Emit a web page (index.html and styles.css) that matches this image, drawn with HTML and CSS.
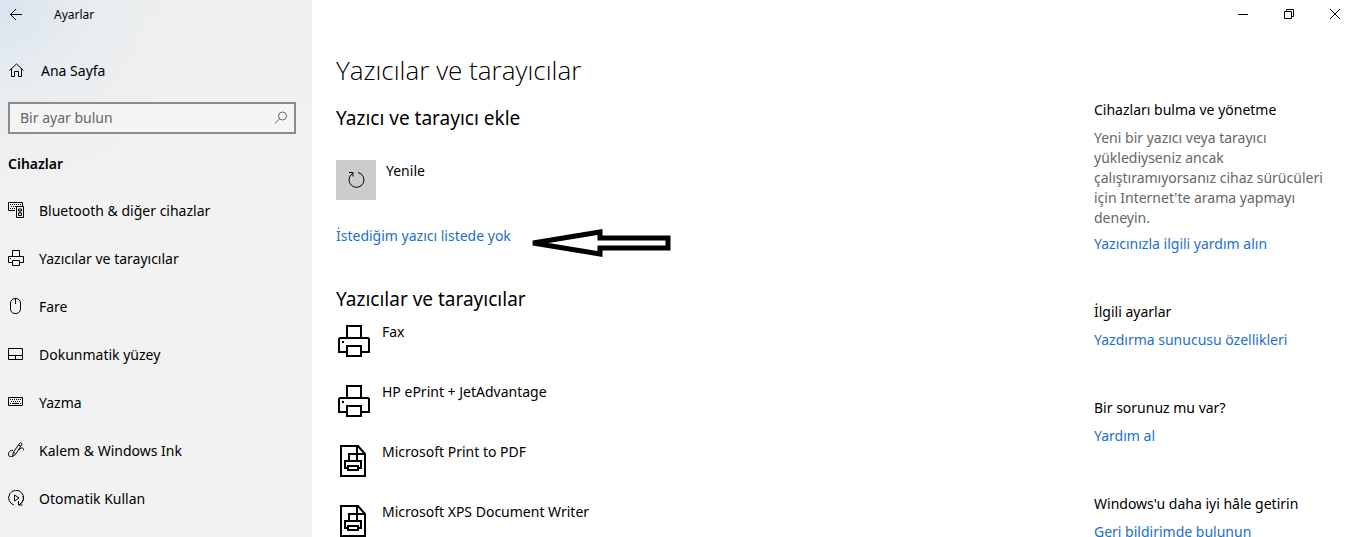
FILE: index.html
```
<!DOCTYPE html>
<html lang="tr">
  <head>
    <meta charset="UTF-8" />
    <meta name="viewport" content="width=device-width, initial-scale=1.0" />
    <title>Ayarlar</title>
    <link rel="stylesheet" href="styles.css">
  </head>
  <body>
    <!-- icons used more than once -->
    <svg class="symbols" aria-hidden="true">
      <symbol id="printer" viewBox="0 0 32 32">
        <path d="M9 13V1h14v12M9 27H1V14l1-1h28l1 1v13h-8M9 21h14v10H9z" />
        <path class="solid" d="M4 16h2v2H4z" />
      </symbol>
      <symbol id="printer-file" viewBox="0 0 32 32">
        <path d="M3 1h17l7 8v22H3zM19 1v8h8" />
        <path d="M11 17V9h8v8M10 23H7v-7h16v7h-3M10 21h10v4H10z" />
      </symbol>
    </svg>

    <div class="sidebar">
      <header class="titlebar">
        <button class="back" aria-label="Geri">
          <svg class="icon" viewBox="0 0 16 16"><path d="M14 7.5H2.5M8 2L2.5 7.5 8 13" /></svg>
        </button>
        <span>Ayarlar</span>
      </header>
      <a href="#" class="nav-link home">
        <svg class="icon" viewBox="0 0 16 16"><path d="M1.5 8.5l7-6.500 7 6.500M3.500 7v7.500h3V9.500h4v5h3V7" /></svg>
        Ana Sayfa
      </a>
      <form class="search">
        <input type="text" name="search" placeholder="Bir ayar bulun" aria-label="Bir ayar bulun" />
        <button type="button" aria-label="Ara">
          <svg viewBox="0 0 14 14"><circle cx="8.5" cy="5" r="4" /><path d="M5.500 8L1 12.500" /></svg>
        </button>
      </form>
      <h2 class="group-title">Cihazlar</h2>
      <nav>
        <a href="#" class="nav-link">
          <svg class="icon" viewBox="0 0 16 16">
            <path d="M7 8.500H.5v-8h14V4" />
            <path stroke-dasharray="1 1" d="M2 2.500h11M3 4.500h5M2 6.500h5" />
            <path d="M8.500 4.500h7v11h-7z" />
            <path d="M10.500 7h3v2h-3zM10.500 11h3v2.500h-3zM12 9v2" />
          </svg>
          Bluetooth &amp; diğer cihazlar
        </a>
        <a href="#" class="nav-link">
          <svg class="icon" viewBox="0 0 16 16">
            <path d="M4.500 6.500v-6h7v6M4.500 12.500h-4v-6h15v6h-4M4.500 10.500h7v5h-7z" />
            <path class="solid" d="M2 8h1v1H2z" />
          </svg>
          Yazıcılar ve tarayıcılar
        </a>
        <a href="#" class="nav-link">
          <svg class="icon" viewBox="0 0 16 16"><rect x="2.5" y=".5" width="10" height="15" rx="4.5" /><path d="M7.500 1v5" /></svg>
          Fare
        </a>
        <a href="#" class="nav-link">
          <svg class="icon" viewBox="0 0 16 16"><path d="M.5 2.500h14v11H.5zM.5 9.500h14M7.500 9.500v4" /></svg>
          Dokunmatik yüzey
        </a>
        <a href="#" class="nav-link">
          <svg class="icon" viewBox="0 0 16 16">
            <path d="M.5 3.500h14v8H.5z" />
            <path stroke-dasharray="1 1" d="M2 5.500h11M3 7.500h10" />
            <path d="M2 9.500h1M4 9.500h7M12 9.500h1" />
          </svg>
          Yazma
        </a>
        <a href="#" class="nav-link">
          <svg class="icon" viewBox="0 0 16 16">
            <path d="M4.500 14.500l1-4.500 6-8.500c1.500-1.500 3-.5 2 1.500l-6 9.500zM10.500 3l2.500 1.500M5.500 10l2 2" />
            <path d="M5 8.500C1.500 7.500-.5 12 1 14c1 1 2 .5 3.500.5M11 8c2-3.500 6-2 4 .5" />
          </svg>
          Kalem &amp; Windows Ink
        </a>
        <a href="#" class="nav-link">
          <svg class="icon" viewBox="0 0 16 16">
            <path d="M6 15A7.500 7.500 0 1 1 11.500 14.500C15 12.500 16 9 15 6" />
            <path d="M6.500 5v6l4.500-3zM10.500 11v4h4" />
          </svg>
          Otomatik Kullan
        </a>
      </nav>
    </div>

    <div class="page">
      <div class="window-buttons">
        <button aria-label="Simge durumuna küçült">
          <svg viewBox="0 0 12 12"><path d="M1 6.500h10" /></svg>
        </button>
        <button aria-label="Önceki boyut">
          <svg viewBox="0 0 12 12"><path d="M1.500 3.500h7v7h-7zM3.500 3V1.500h7v7H9" /></svg>
        </button>
        <button aria-label="Kapat">
          <svg viewBox="0 0 12 12"><path d="M1 1l10 10M11 1L1 11" /></svg>
        </button>
      </div>

      <div class="columns">
        <main>
          <h1>Yazıcılar ve tarayıcılar</h1>
          <h2>Yazıcı ve tarayıcı ekle</h2>
          <button class="refresh">
            <span class="refresh-box">
              <svg viewBox="0 0 20 20"><path d="M12 2.500a7.500 7.500 0 1 1-5.500 1M3 2.500h4v4" /></svg>
            </span>
            Yenile
          </button>
          <div class="not-listed">
            <a href="#">İstediğim yazıcı listede yok</a>
            <svg class="arrow" viewBox="0 0 142 30">
              <path d="M4 15L71 4v6h68v10H71v6z" />
            </svg>
          </div>
          <h2>Yazıcılar ve tarayıcılar</h2>
          <ul class="printers">
            <li><svg><use href="#printer" /></svg>Fax</li>
            <li><svg><use href="#printer" /></svg>HP ePrint + JetAdvantage</li>
            <li><svg><use href="#printer-file" /></svg>Microsoft Print to PDF</li>
            <li><svg><use href="#printer-file" /></svg>Microsoft XPS Document Writer</li>
          </ul>
        </main>

        <aside>
          <section>
            <h3>Cihazları bulma ve yönetme</h3>
            <p>Yeni bir yazıcı veya tarayıcı yüklediyseniz ancak çalıştıramıyorsanız cihaz sürücüleri için Internet'te arama yapmayı deneyin.</p>
            <a href="#">Yazıcınızla ilgili yardım alın</a>
          </section>
          <section>
            <h3>İlgili ayarlar</h3>
            <a href="#">Yazdırma sunucusu özellikleri</a>
          </section>
          <section>
            <h3>Bir sorunuz mu var?</h3>
            <a href="#">Yardım al</a>
          </section>
          <section>
            <h3>Windows'u daha iyi hâle getirin</h3>
            <a href="#">Geri bildirimde bulunun</a>
          </section>
        </aside>
      </div>
    </div>
  </body>
</html>
```

FILE: styles.css
```
* {
  box-sizing: border-box;
}
body {
  display: flex;
  height: 100vh;
  margin: 0;
  overflow: hidden;
  background-color: #fff;
  color: #000;
  font-family: "Segoe UI", "Noto Sans", sans-serif;
  font-size: 14px;
  line-height: 20px;
}
h1,
h2,
h3,
p,
ul {
  margin: 0;
  padding: 0;
}
h1,
h2,
h3 {
  font-weight: normal;
}
a {
  color: #1a6fce;
  text-decoration: none;
}
button {
  padding: 0;
  border: none;
  background: none;
  color: inherit;
  font: inherit;
  cursor: pointer;
}
svg {
  display: block;
  flex: none;
  fill: none;
  stroke: #000;
}
.solid {
  fill: #000;
  stroke: none;
}
.symbols {
  display: none;
}
.icon {
  width: 16px;
  height: 16px;
}

/* left menu */
.sidebar {
  flex: none;
  width: 312px;
  padding: 0 8px;
  background: radial-gradient(circle at 0 0, #d8e4ef, #e9edf0 90px, transparent 200px),
    linear-gradient(#efefef, #f2f2f2 200px);
}
.titlebar {
  display: flex;
  align-items: center;
  gap: 30px;
  height: 30px;
  font-size: 12px;
}
.nav-link {
  display: flex;
  align-items: center;
  gap: 15px;
  height: 48px;
  color: #000;
}
.nav-link .icon {
  margin-bottom: 2px;
}
.home {
  margin-top: 17px;
  gap: 17px;
}
.search {
  display: flex;
  height: 32px;
  margin-top: 7px;
  margin-right: 8px;
  border: 2px solid #8b8b8b;
  background-color: #f5f5f5;
}
.search input {
  flex: 1;
  min-width: 0;
  padding: 0 10px;
  border: none;
  outline: none;
  background: none;
  font: inherit;
}
.search input::placeholder {
  color: #666;
  opacity: 1;
}
.search button {
  width: 28px;
  padding-left: 8px;
}
.search svg {
  width: 14px;
  height: 14px;
  stroke: #666;
}
.sidebar .group-title {
  margin: 20px 0 13px;
  font-size: 14px;
  font-weight: 600;
  line-height: 20px;
}

/* right side */
.page {
  flex: 1;
  min-width: 0;
}
.window-buttons {
  display: flex;
  justify-content: flex-end;
  gap: 10px;
  height: 28px;
}
.window-buttons button {
  display: flex;
  align-items: center;
  justify-content: center;
  width: 36px;
}
.window-buttons svg {
  width: 12px;
  height: 12px;
}
.columns {
  display: flex;
  justify-content: space-between;
  padding: 24px 24px 0;
}
h1 {
  margin-bottom: 16px;
  font-family: "Segoe UI", "Open Sans", sans-serif;
  font-size: 26px;
  font-weight: 350;
  line-height: 36px;
}
h2 {
  font-size: 19px;
  line-height: 28px;
}
.refresh {
  display: flex;
  gap: 10px;
  margin: 28px 0 24px;
  line-height: 22px;
  text-align: left;
}
.refresh-box {
  display: flex;
  align-items: center;
  justify-content: center;
  width: 40px;
  height: 40px;
  background-color: #ccc;
}
.refresh-box svg {
  width: 20px;
  height: 20px;
}
.not-listed {
  display: flex;
  gap: 18px;
  height: 61px;
}
.not-listed a {
  padding-top: 2px;
}
.arrow {
  width: 142px;
  height: 30px;
  margin-top: 4px;
  stroke-width: 5;
}
.printers {
  padding-top: 9px;
  list-style: none;
}
.printers li {
  display: flex;
  gap: 12px;
  height: 60px;
  padding-left: 2px;
}
.printers svg {
  width: 32px;
  height: 32px;
  margin-top: 3px;
  stroke-width: 2;
}

/* help column */
aside {
  display: flex;
  flex: none;
  flex-direction: column;
  gap: 48px;
  width: 235px;
  padding-top: 48px;
}
aside h3 {
  margin-bottom: 8px;
  font-size: 14px;
}
aside p {
  margin-bottom: 6px;
  color: #666;
}
aside a {
  display: block;
}
```
